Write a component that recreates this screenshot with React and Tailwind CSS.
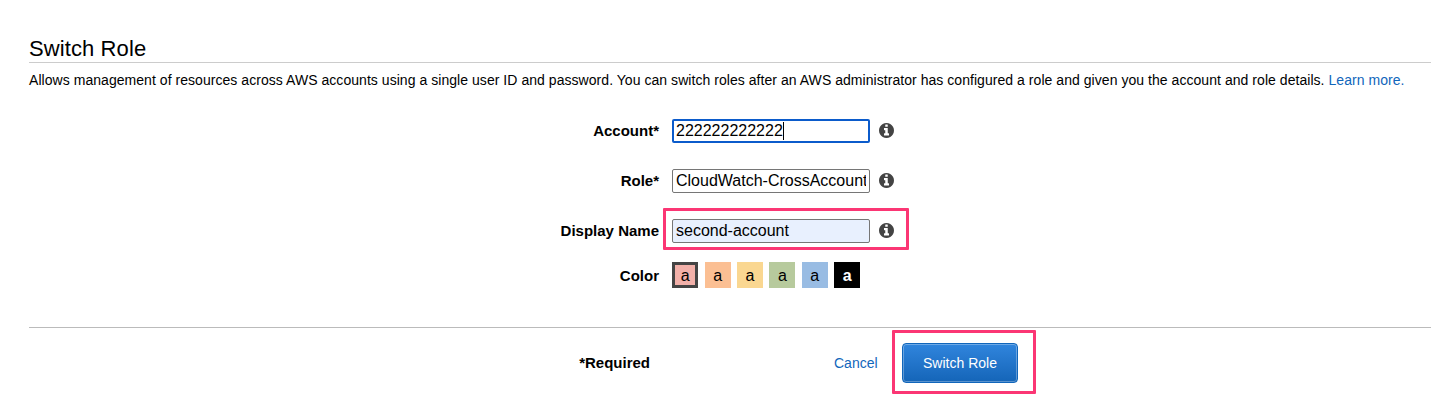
const SWATCHES = [
  "bg-[#f2b0a9] border-[3px] border-[#444444]",
  "bg-[#fbbf93]",
  "bg-[#fad791]",
  "bg-[#b7ca9d]",
  "bg-[#99bce3]",
  "bg-black text-white font-bold",
];

function InfoIcon() {
  return (
    <svg viewBox="128 128 1536 1536" className="mb-px ml-[9px] size-[15px] shrink-0" fill="#444444">
      <path d="M1152 1376v-160q0-14-9-23t-23-9h-96v-512q0-14-9-23t-23-9h-320q-14 0-23 9t-9 23v160q0 14 9 23t23 9h96v320h-96q-14 0-23 9t-9 23v160q0 14 9 23t23 9h448q14 0 23-9t9-23zm-128-896v-160q0-14-9-23t-23-9h-192q-14 0-23 9t-9 23v160q0 14 9 23t23 9h192q14 0 23-9t9-23zm640 416q0 209-103 385.5t-279.5 279.5-385.5 103-385.5-103-279.5-279.5-103-385.5 103-385.5 279.5-279.5 385.5-103 385.5 103 279.5 279.5 103 385.5z" />
    </svg>
  );
}

function Field({ label, value, inputClass, caret, highlight }) {
  return (
    <div className="relative flex h-[24px] items-center">
      <label className="w-[630px] text-right text-[15px] leading-[24px] font-bold">
        {label}
      </label>
      <div className="relative ml-[13px] h-[24px] w-[198px]">
        <input
          type="text"
          defaultValue={value}
          className={`block h-full w-full rounded-[2px] text-[16px] outline-none ${inputClass}`}
        />
        {caret && <span className="absolute top-[3px] left-[111px] h-[18px] w-px bg-black" />}
      </div>
      <InfoIcon />
      {highlight && (
        <span className="pointer-events-none absolute -top-[11px] left-[634px] h-[42px] w-[246px] rounded-[1px] border-[3px] border-[#fb3674]" />
      )}
    </div>
  );
}

export default function App() {
  return (
    <main className="h-[419px] overflow-hidden bg-white pl-[29px] font-['Liberation_Sans',Arial,sans-serif] text-black">
      <h1 className="h-[63px] border-b border-[#cccccc] pt-[35px] text-[22px] leading-[27px] font-normal">
        <span className="inline-block tracking-[0.1px]">Switch Role</span>
      </h1>
      <p className="mt-[7px] text-[14px] leading-[20px] tracking-[0.047px] whitespace-nowrap">
        Allows management of resources across AWS accounts using a single user ID and password. You can switch roles
        after an AWS administrator has configured a role and given you the account and role details.{" "}
        <a className="text-[#1166bb]">Learn more.</a>
      </p>

      <form className="mt-[29px] flex flex-col gap-[26px]">
        <Field label="Account*" value="222222222222" caret inputClass="border-2 border-[#0b5bcb] px-[2px]" />
        <Field label="Role*" value="CloudWatch-CrossAccountSharingRole" inputClass="border border-[#767676] px-[3px]" />
        <Field
          label="Display Name"
          value="second-account"
          highlight
          inputClass="border border-[#767676] bg-[#e8f0fe] px-[3px]"
        />
      </form>

      <div className="mt-[19px] flex h-[26px] items-center">
        <span className="w-[630px] pt-[2px] text-right text-[15px] font-bold">Color</span>
        <div className="ml-[13.2px] flex gap-[6.4px]">
          {SWATCHES.map((style) => (
            <span key={style} className={`flex size-[26px] items-center justify-center text-[16px] leading-none ${style}`}>
              <span className="pt-[2px]">a</span>
            </span>
          ))}
        </div>
      </div>

      <footer className="mt-[39px] flex items-start border-t border-[#bbbbbb] pt-[15px]">
        <span className="w-[621px] text-right text-[15px] leading-[40px] font-bold">*Required</span>
        <a className="ml-[184px] w-[44px] text-[14px] leading-[40px] text-[#1166bb]">Cancel</a>
        <div className="relative ml-[24px]">
          <button
            type="button"
            className="block h-[40px] w-[116px] rounded-[4px] border border-[#1166bb] bg-linear-to-b from-[#3085dd] to-[#1465b8] text-[14px] text-white shadow-[inset_0_0_0_1px_rgba(255,255,255,0.3)]"
          >
            Switch Role
          </button>
          <span className="pointer-events-none absolute -top-[13px] -left-[10px] h-[64px] w-[144px] rounded-[1px] border-[3px] border-[#fb3674]" />
        </div>
      </footer>
    </main>
  );
}
